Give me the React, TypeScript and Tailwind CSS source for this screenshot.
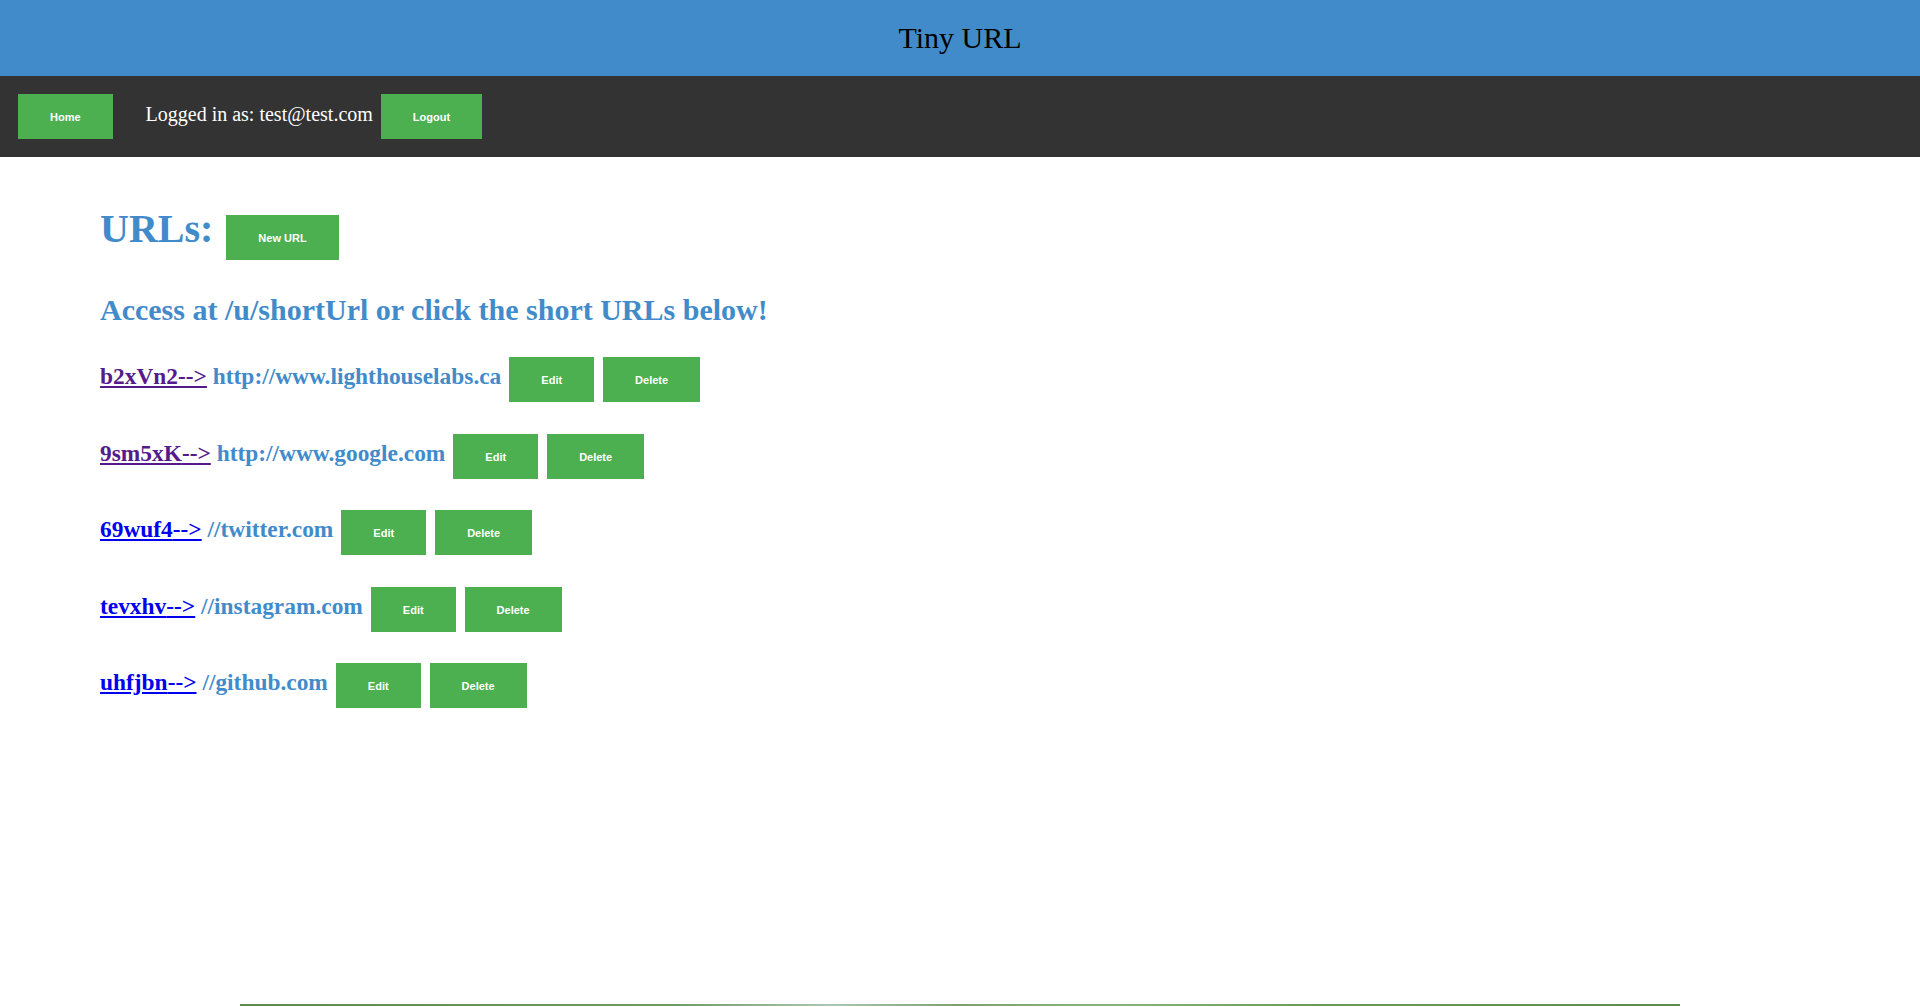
import React from "react";

const rows = [
  { short: "b2xVn2", long: "http://www.lighthouselabs.ca", visited: true },
  { short: "9sm5xK", long: "http://www.google.com", visited: true },
  { short: "69wuf4", long: "//twitter.com", visited: false },
  { short: "tevxhv", long: "//instagram.com", visited: false },
  { short: "uhfjbn", long: "//github.com", visited: false },
];

function Btn({ label, className = "" }: { label: string; className?: string }) {
  return (
    <button
      className={
        "bg-[#4caf50] text-white font-['Liberation_Sans',Arial,sans-serif] font-bold text-[11px] leading-[13px] pt-[17px] pb-[15px] px-8 border-0 " +
        className
      }
    >
      {label}
    </button>
  );
}

export default function App() {
  return (
    <div className="font-['Liberation_Serif','Times_New_Roman',serif] bg-white w-full">
      <header className="h-[76px] bg-[#428bca] flex justify-center">
        <h1 className="text-[30px] leading-[30px] pt-[23px] text-black font-normal">Tiny URL</h1>
      </header>
      <nav className="h-[81px] bg-[#333333] flex items-baseline pt-[18px] pl-[18px]">
        <Btn label="Home" />
        <span className="ml-[33px] text-white text-[20px] leading-none">Logged in as: test@test.com</span>
        <Btn label="Logout" className="ml-2" />
      </nav>
      <main className="px-[100px]">
        <div className="flex items-baseline mt-[52px]">
          <h1 className="text-[40px] leading-none font-bold text-[#428bca]">URLs:</h1>
          <Btn label="New URL" className="ml-[13px]" />
        </div>
        <h2 className="mt-[35px] text-[30px] leading-none font-bold text-[#428bca]">
          Access at /u/shortUrl or click the short URLs below!
        </h2>
        <div className="flex flex-col gap-[31.5px] mt-[32px]">
          {rows.map((r) => (
            <div key={r.short} className="flex items-baseline">
              <span className="text-[23.4px] leading-none font-bold whitespace-pre">
                <a
                  href="#"
                  className={"underline " + (r.visited ? "text-[#551a8b]" : "text-[#0000ee]")}
                >
                  {r.short}--&gt;
                </a>
                <span className="text-[#428bca]"> {r.long}</span>
              </span>
              <Btn label="Edit" className="ml-2" />
              <Btn label="Delete" className="ml-[9px]" />
            </div>
          ))}
        </div>
        <div className="mt-[296px] mx-auto w-[1440px] h-[2px] bg-[linear-gradient(to_right,#5e8a50_0%,#6f9a62_30%,#a8c8b4_41%,#7aa26e_50%,#8ab47e_60%,#6a9a5a_75%,#5e8a50_100%)]" />
      </main>
    </div>
  );
}
